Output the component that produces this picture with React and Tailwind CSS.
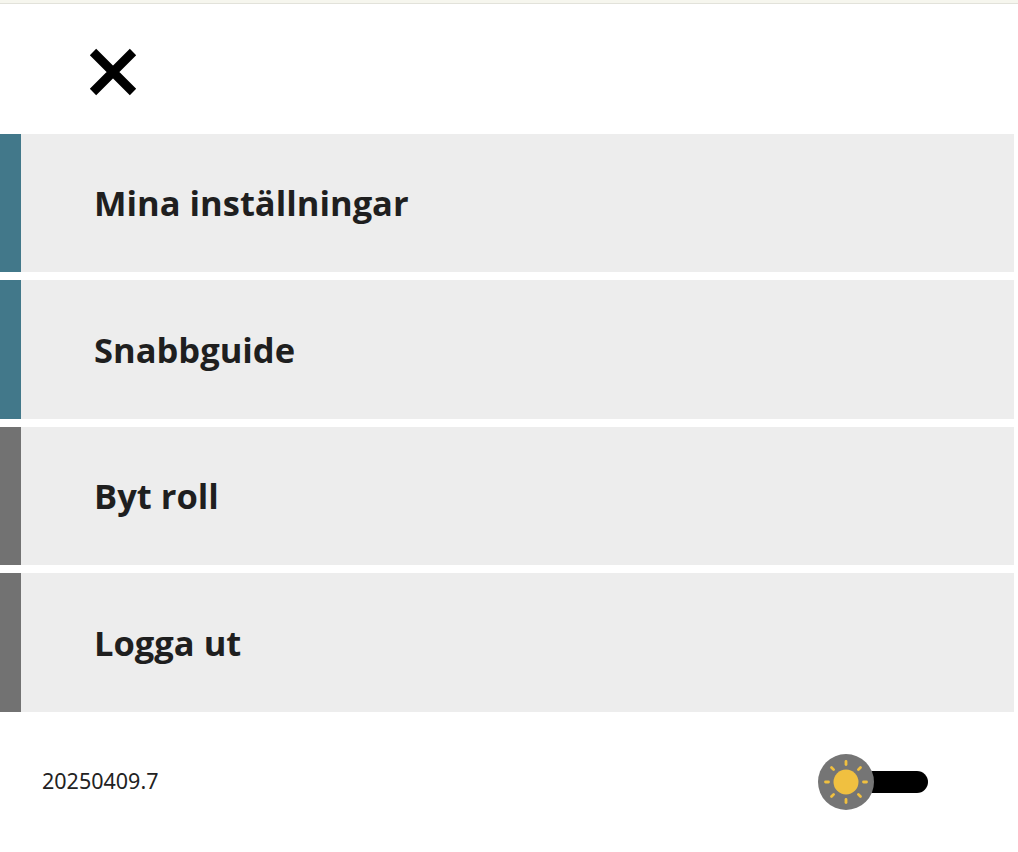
const items = [
  { label: 'Mina inställningar', bar: 'bg-[#42788a]' },
  { label: 'Snabbguide', bar: 'bg-[#42788a]' },
  { label: 'Byt roll', bar: 'bg-[#727272]' },
  { label: 'Logga ut', bar: 'bg-[#727272]' },
]

function Sun() {
  const rays = [0, 45, 90, 135, 180, 225, 270, 315]
  return (
    <svg width="56" height="56" viewBox="0 0 56 56">
      <circle cx="28" cy="28" r="12.5" fill="#f0c040" />
      {rays.map((a) => (
        <line
          key={a}
          x1="28"
          y1="7.5"
          x2="28"
          y2="10.5"
          stroke="#f0c040"
          strokeWidth="2.8"
          strokeLinecap="round"
          transform={`rotate(${a} 28 28)`}
        />
      ))}
    </svg>
  )
}

function CloseIcon() {
  return (
    <svg width="48" height="48" viewBox="0 0 48 48">
      <path d="M4 4 L44 44 M44 4 L4 44" stroke="black" strokeWidth="9" fill="none" />
    </svg>
  )
}

export default function App() {
  return (
    <div className="w-[1018px] h-[852px] bg-white font-['Open_Sans',sans-serif] text-[#1f1f1f]">
      <div className="h-[3px] bg-[#f6f6ee]" />
      <div className="h-px bg-[#e2e2da]" />

      <div className="h-[130px] pl-[89px] pt-[44px]">
        <CloseIcon />
      </div>

      <div className="flex flex-col gap-2 pr-1">
        {items.map((item) => (
          <button key={item.label} className="flex h-[138.4px] bg-[#ededed] text-left">
            <div className={`w-[21px] ${item.bar}`} />
            <div className="flex items-center pl-[73px] pt-px text-[34.5px] font-bold leading-none">
              {item.label}
            </div>
          </button>
        ))}
      </div>

      <div className="flex items-center justify-between pl-[42px] pr-[90px] pt-[42px]">
        <span className="text-[21.5px] font-['Noto_Sans',sans-serif] text-[#222]">20250409.7</span>
        <div className="flex items-center">
          <div className="w-14 h-14 rounded-full bg-[#757575] flex items-center justify-center z-10">
            <Sun />
          </div>
          <div className="w-[62px] h-[22px] -ml-2 rounded-r-full bg-black" />
        </div>
      </div>
    </div>
  )
}
